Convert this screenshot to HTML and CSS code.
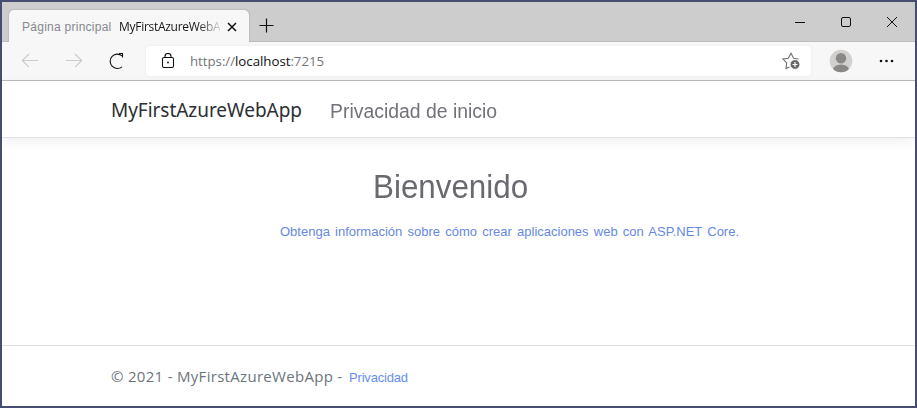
FILE: index.html
```html
<!DOCTYPE html>
<html lang="es">
<head>
<meta charset="utf-8">
<title>Página principal MyFirstAzureWebApp</title>
<link rel="stylesheet" href="styles.css">
</head>
<body>
<div class="window">
  <header class="tabbar">
    <div class="tab">
      <span class="tab-prefix">Página principal</span>
      <span class="tab-title">MyFirstAzureWebA</span>
      <svg class="tab-close" width="10" height="10" viewBox="0 0 10 10"><path d="M1 1l8 8M9 1l-8 8"/></svg>
    </div>
    <svg class="new-tab" width="15" height="15" viewBox="0 0 15 15"><path d="M7.5 .5v14M.5 7.5h14"/></svg>
    <div class="controls">
      <svg width="12" height="12" viewBox="0 0 12 12"><path d="M1 6.5h10"/></svg>
      <svg width="12" height="12" viewBox="0 0 12 12"><rect x="1.5" y="1.5" width="9" height="9" rx="1.5"/></svg>
      <svg width="12" height="12" viewBox="0 0 12 12"><path d="M1 1l10 10M11 1L1 11"/></svg>
    </div>
  </header>
  <div class="toolbar">
    <svg class="arrow" width="18" height="16" viewBox="0 0 18 16"><path d="M17 7.500H1.500M8 1L1.200 7.500L8 14"/></svg>
    <svg class="arrow" width="18" height="16" viewBox="0 0 18 16"><path d="M1 7.500h15.500M10 1l6.800 6.500L10 14"/></svg>
    <svg class="reload" width="16" height="18" viewBox="0 0 16 18"><path d="M13 14.800A7.200 7.200 0 1 1 13 3.800M10 1.500H13.500V5.500"/></svg>
    <div class="address">
      <svg class="lock" width="14" height="16" viewBox="0 0 14 16"><rect x="1.500" y="4.500" width="11" height="10" rx="1.500"/><path d="M4 4.500V3.500a3 3 0 0 1 6 0v1"/><circle cx="7" cy="9.500" r=".4"/></svg>
      <span class="url">https://<b>localhost</b>:7215</span>
      <svg class="star" width="19" height="18" viewBox="0 0 19 18"><path d="M7.500 15L4 16.500L4.700 11L1 7l5.300-.8L9 1.200l2.600 5L16.500 7"/><circle cx="13" cy="12.500" r="4.700"/><path class="plus" d="M13 10v5M10.500 12.500h5"/></svg>
    </div>
    <svg class="avatar" width="24" height="24" viewBox="0 0 24 24"><defs><clipPath id="face"><circle cx="12" cy="12" r="11.300"/></clipPath></defs><circle cx="12" cy="12" r="11.300" fill="#d2d0ce"/><g fill="#8a8886" clip-path="url(#face)"><circle cx="12" cy="9.300" r="5.200"/><ellipse cx="12" cy="21" rx="8" ry="5.500"/></g></svg>
    <svg class="more" width="15" height="4" viewBox="0 0 15 4"><circle cx="2" cy="2" r="1.300"/><circle cx="7.500" cy="2" r="1.300"/><circle cx="13" cy="2" r="1.300"/></svg>
  </div>
  <nav class="nav">
    <span class="brand">MyFirstAzureWebApp</span>
    <span class="nav-link">Privacidad de inicio</span>
  </nav>
  <main class="main">
    <h1>Bienvenido</h1>
    <p class="learn">Obtenga información sobre cómo crear aplicaciones web con ASP.NET Core.</p>
  </main>
  <footer class="footer">
    <span class="copyright">© 2021 - MyFirstAzureWebApp -</span>
    <span class="privacy">Privacidad</span>
  </footer>
</div>
</body>
</html>
```
FILE: styles.css
```css
* { box-sizing: border-box; }
body { margin: 0; background: #fff; font-family: "Liberation Sans", sans-serif; }
svg { flex: none; fill: none; stroke: #111; stroke-width: 1; }
span { white-space: nowrap; }
.window { width: 917px; height: 408px; border: 2px solid #454d73; display: flex; flex-direction: column; overflow: hidden; }
.tabbar { height: 40px; flex: none; background: #cdcdcd; border-bottom: 1px solid #bdbdbd; display: flex; align-items: flex-start; }
.tab { width: 240px; height: 32px; margin: 8px 0 0 7px; padding-left: 13px; border-radius: 5px 5px 0 0; background: #f7f7f7; display: flex; align-items: center; flex: none; box-shadow: 0 0 2px #999; clip-path: inset(-3px -3px 0 -3px); }
.tab-prefix { width: 97px; padding-top: 1px; font-size: 12px; letter-spacing: .26px; color: #858890; }
.tab-title { width: 101px; overflow: hidden; font: 12px "Open Sans", sans-serif; letter-spacing: -.28px; color: transparent; background: linear-gradient(90deg, #151515 78%, #ccc 98%); background-clip: text; -webkit-background-clip: text; }
.tab-close { margin-left: 7px; margin-top: 1px; stroke-width: 1.5; }
.new-tab { margin: 16px 0 0 10px; stroke-width: 1.2; }
.controls { margin: 14px 17px 0 auto; display: flex; gap: 34px; }
.toolbar { height: 39px; flex: none; background: #f7f7f7; border-bottom: 1px solid #b9b9b9; display: flex; align-items: center; padding-left: 19px; }
.arrow { stroke: #cbcbcb; margin-right: 26px; stroke-width: 1.1; }
.reload { stroke-width: 1.1; margin-right: 21px; }
.address { width: 665px; height: 30px; background: #fff; border-radius: 4px; display: flex; align-items: center; padding: 0 10px 0 15px; box-shadow: 0 0 3px #e6e6e6; }
.lock { stroke-width: 1.1; }
.url { margin-left: 15px; font: 13.300px "Open Sans", sans-serif; color: #767676; letter-spacing: -.04px; }
.url b { font-weight: 400; color: #111; }
.star { margin-left: auto; stroke: #707070; stroke-width: 1.1; }
.star circle { fill: #666; stroke: #fff; stroke-width: .5; }
.star .plus { stroke: #fff; stroke-width: 1.2; }
.avatar { stroke: none; margin-left: 18px; }
.more { fill: #111; stroke: none; margin-left: 26px; }
.nav { height: 57px; flex: none; border-bottom: 1px solid #dee2e6; box-shadow: 0 4px 12px rgba(0,0,0,.06); display: flex; align-items: center; padding-left: 109px; }
.brand { width: 219px; padding-top: 1px; font: 19px "Noto Sans", sans-serif; letter-spacing: -.04px; color: #2b2f33; }
.nav-link { font-size: 20px; transform: scaleX(.97); transform-origin: left; color: #727079; padding-top: 4px; }
.main { height: 207px; flex: none; }
h1 { margin: 29px 0 0 371px; font-size: 33px; line-height: 40px; transform: scaleX(.95); transform-origin: left; font-weight: 400; color: #69696f; }
.learn { margin: 17px 0 0 278px; font-size: 13px; line-height: 16px; word-spacing: 1.600px; color: #6688df; white-space: nowrap; }
.footer { flex: 1; border-top: 1px solid #e1e1e1; display: flex; align-items: center; padding: 0 0 0 109px; }
.copyright { width: 238px; font: 15px "Open Sans", sans-serif; letter-spacing: .3px; color: #6c757d; }
.privacy { font-size: 13px; letter-spacing: -.18px; color: #668ef0; padding-top: 2px; }
```
